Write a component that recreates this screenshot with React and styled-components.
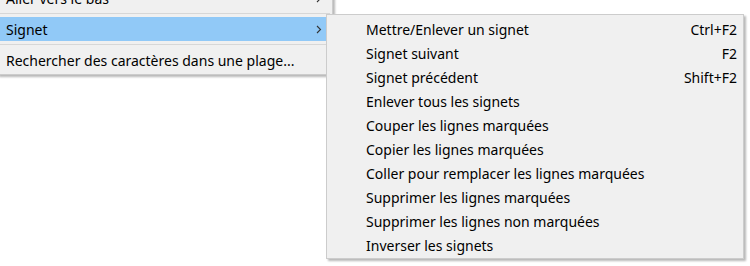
import styled, { createGlobalStyle } from "styled-components";

const GlobalStyle = createGlobalStyle`
  html, body {
    margin: 0;
    padding: 0;
    background: #ffffff;
    overflow: hidden;
  }
  body {
    font-family: "Segoe UI", "Noto Sans", sans-serif;
    font-size: 14px;
    color: #000000;
  }
`;

const Screen = styled.div`
  width: 750px;
  height: 266px;
  display: flex;
  align-items: flex-start;
  overflow: hidden;
`;

const Menu = styled.div`
  flex: none;
  display: flex;
  flex-direction: column;
  background: #f0f0f0;
  border: 1px solid #cccccc;
  padding: 2px;
  box-shadow: 2px 2px 2px rgba(0, 0, 0, 0.28);
`;

const ParentMenu = styled(Menu)`
  width: 330px;
  margin-left: -3px;
  margin-top: -17px;
`;

const SubMenu = styled(Menu)`
  width: 412px;
  margin-left: -7px;
  margin-top: 14px;
  position: relative;
  z-index: 2;
  padding: 2px 2px 1px;
`;

const Item = styled.div`
  height: 24px;
  display: flex;
  align-items: center;
  padding: 0 ${(p) => (p.$sub ? "4px" : "8px")} 0 ${(p) => (p.$sub ? "37px" : "6px")};
  background: ${(p) => (p.$active ? "#91c9f7" : "transparent")};
  white-space: nowrap;
`;

const Label = styled.span`
  flex: 1;
`;

const Shortcut = styled.span`
  margin-left: 24px;
`;

const Separator = styled.div`
  height: 1px;
  background: #d7d7d7;
  margin: 3px 0 3px;
`;

const Chevron = () => (
  <svg width="6" height="9" viewBox="0 0 6 9">
    <polyline points="1,1 4.5,4.5 1,8" fill="none" stroke="#333" strokeWidth="1.1" />
  </svg>
);

const subItems = [
  ["Mettre/Enlever un signet", "Ctrl+F2"],
  ["Signet suivant", "F2"],
  ["Signet précédent", "Shift+F2"],
  ["Enlever tous les signets"],
  ["Couper les lignes marquées"],
  ["Copier les lignes marquées"],
  ["Coller pour remplacer les lignes marquées"],
  ["Supprimer les lignes marquées"],
  ["Supprimer les lignes non marquées"],
  ["Inverser les signets"],
];

export default function App() {
  return (
    <>
      <GlobalStyle />
      <Screen>
        <ParentMenu>
          <Item>
            <Label>Aller vers le bas</Label>
            <Chevron />
          </Item>
          <Separator />
          <Item $active>
            <Label>Signet</Label>
            <Chevron />
          </Item>
          <Separator />
          <Item>
            <Label>Rechercher des caractères dans une plage...</Label>
          </Item>
        </ParentMenu>
        <SubMenu>
          {subItems.map(([label, key]) => (
            <Item $sub key={label}>
              <Label>{label}</Label>
              {key && <Shortcut>{key}</Shortcut>}
            </Item>
          ))}
        </SubMenu>
      </Screen>
    </>
  );
}
